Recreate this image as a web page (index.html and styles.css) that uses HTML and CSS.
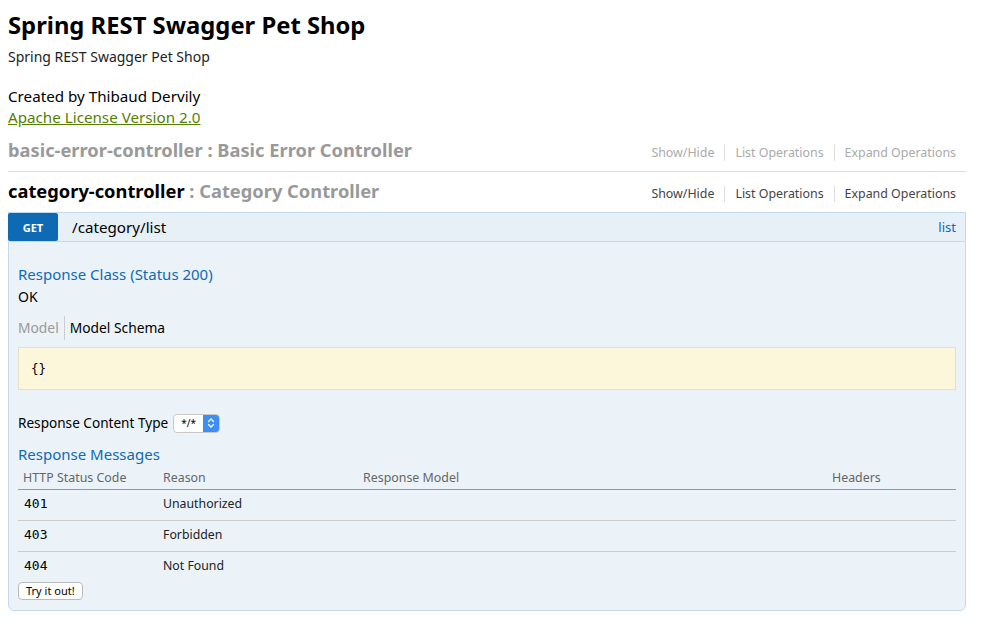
FILE: index.html
```html
<!DOCTYPE html>
<html>
<head>
<meta charset="utf-8">
<title>Spring REST Swagger Pet Shop</title>
<link rel="stylesheet" href="styles.css">
</head>
<body>
<div class="container">
  <div class="info">
    <h1 class="info-title">Spring REST Swagger Pet Shop</h1>
    <div class="info-desc">Spring REST Swagger Pet Shop</div>
    <div class="info-contact">Created by Thibaud Dervily</div>
    <div class="info-license"><a href="#">Apache License Version 2.0</a></div>
  </div>

  <div class="resource">
    <div class="resource-heading first">
      <h2 class="resource-name inactive">basic-error-controller <span class="resource-desc">: Basic Error Controller</span></h2>
      <ul class="options light">
        <li>Show/Hide</li>
        <li>List Operations</li>
        <li>Expand Operations</li>
      </ul>
    </div>
  </div>

  <div class="resource">
    <div class="resource-heading second">
      <h2 class="resource-name">category-controller <span class="resource-desc">: Category Controller</span></h2>
      <ul class="options">
        <li>Show/Hide</li>
        <li>List Operations</li>
        <li>Expand Operations</li>
      </ul>
    </div>

    <div class="operation">
      <div class="op-heading">
        <span class="http-method">GET</span>
        <span class="op-path">/category/list</span>
        <span class="op-summary">list</span>
      </div>
      <div class="op-content">
        <h4 class="section-title">Response Class (Status 200)</h4>
        <div class="status-text">OK</div>
        <div class="model-tabs">
          <span class="tab tab-inactive">Model</span>
          <span class="tab tab-active">Model Schema</span>
        </div>
        <div class="snippet"><code>{}</code></div>

        <div class="content-type">
          <span>Response Content Type</span>
          <span class="select">
            <span class="select-value">*/*</span>
            <span class="select-arrow">
              <svg width="8" height="12" viewBox="0 0 8 12"><path d="M1.5 4.5 L4 2 L6.5 4.5 M1.5 7.5 L4 10 L6.5 7.5" fill="none" stroke="#fff" stroke-width="1.3" stroke-linecap="round" stroke-linejoin="round"/></svg>
            </span>
          </span>
        </div>

        <h4 class="section-title messages-title">Response Messages</h4>
        <table class="messages">
          <thead>
            <tr>
              <th class="c1">HTTP Status Code</th>
              <th class="c2">Reason</th>
              <th class="c3">Response Model</th>
              <th class="c4">Headers</th>
            </tr>
          </thead>
          <tbody>
            <tr><td class="code">401</td><td>Unauthorized</td><td></td><td></td></tr>
            <tr><td class="code">403</td><td>Forbidden</td><td></td><td></td></tr>
            <tr class="last"><td class="code">404</td><td>Not Found</td><td></td><td></td></tr>
          </tbody>
        </table>
        <button class="try-btn" type="button">Try it out!</button>
      </div>
    </div>
  </div>
</div>
</body>
</html>
```

FILE: styles.css
```css
* { box-sizing: border-box; }
html, body { margin: 0; padding: 0; background: #fff; }
body {
  font-family: "Noto Sans", "Open Sans", "DejaVu Sans", sans-serif;
  color: #000;
  font-size: 14px;
}
.container {
  width: 958px;
  margin-left: 8px;
}
.info-title {
  margin: 10px 0 0;
  font-size: 23.8px;
  line-height: 30px;
  font-weight: 700;
}
.info-desc {
  margin-top: 7px;
  font-size: 14px;
  line-height: 20px;
  color: #222;
}
.info-contact {
  margin-top: 19px;
  font-size: 15.2px;
  line-height: 21px;
}
.info-license {
  font-size: 15.2px;
  line-height: 21px;
}
.info-license a { color: #547f00; text-decoration: underline; }

.resource-heading {
  display: flex;
  justify-content: space-between;
  align-items: baseline;
}
.resource-heading.first {
  height: 44px;
  padding-top: 10px;
  border-bottom: 1px solid #ddd;
}
.resource-heading.second {
  height: 40px;
  padding-top: 7px;
}
.resource-name {
  margin: 0;
  font-size: 18.3px;
  line-height: 24px;
  font-weight: 700;
  color: #000;
}
.resource-name.inactive { color: #999; }
.resource-desc { color: #999; }
.options {
  display: flex;
  list-style: none;
  margin: 0 10px 0 0;
  padding: 0;
  font-size: 12.4px;
  line-height: 16px;
}
.options li {
  color: #444;
  padding: 0 10px;
  border-left: 1px solid #ddd;
}
.options li:first-child { border-left: none; }
.options li:last-child { padding-right: 0; }
.options.light li { color: #aaa; }

.op-heading {
  display: flex;
  align-items: center;
  height: 29px;
  background: #e7f0f7;
  border: 1px solid #c3d9ec;
  border-bottom: none;
}
.http-method {
  width: 50px;
  height: 28px;
  margin-left: -1px;
  background: #0f6ab4;
  color: #fff;
  font-size: 11px;
  font-weight: 700;
  display: flex;
  align-items: center;
  justify-content: center;
  border-radius: 2px;
}
.op-path {
  margin-left: 14px;
  font-size: 15.2px;
  flex: 1;
}
.op-summary {
  color: #0f6ab4;
  font-size: 13px;
  margin-right: 9px;
}
.op-content {
  background: #ebf3f9;
  border: 1px solid #c3d9ec;
  border-radius: 0 0 6px 6px;
  padding: 21px 9px 10px;
}
.section-title {
  margin: 0;
  color: #0f6ab4;
  font-size: 15px;
  line-height: 22px;
  font-weight: 400;
}
.status-text {
  font-size: 14px;
  line-height: 20px;
  margin-top: 2px;
}
.model-tabs {
  display: flex;
  margin-top: 9px;
  height: 24px;
  align-items: center;
}
.tab { font-size: 13.8px; line-height: 24px; }
.tab-inactive { color: #999; padding-right: 5px; border-right: 1px solid #ccc; }
.tab-active { padding-left: 5px; }
.snippet {
  margin-top: 7px;
  height: 43px;
  background: #fcf6db;
  border: 1px solid #e5e0c6;
  display: flex;
  align-items: center;
  padding-left: 12px;
}
.snippet code {
  font-family: "DejaVu Sans Mono", "Liberation Mono", monospace;
  font-size: 12.5px;
}
.content-type {
  display: flex;
  align-items: center;
  margin-top: 23px;
  font-size: 13.6px;
  line-height: 20px;
  gap: 5px;
}
.select {
  display: inline-flex;
  height: 19px;
  width: 47px;
  border: 1px solid #c8c8c8;
  border-radius: 4px;
  background: #fff;
  overflow: hidden;
}
.select-value {
  flex: 1;
  font-size: 10px;
  line-height: 17px;
  text-align: center;
}
.select-arrow {
  width: 16px;
  background: #3d8ef0;
  display: flex;
  align-items: center;
  justify-content: center;
}
.messages-title {
  margin-top: 10px;
  font-size: 15px;
}
.messages {
  width: 100%;
  border-collapse: collapse;
  margin-top: 2px;
}
.messages th {
  text-align: left;
  font-weight: 400;
  color: #666;
  font-size: 12.4px;
  line-height: 16px;
  padding: 3px 5px 3px;
  border-bottom: 1px solid #999;
}
.c1 { width: 140px; }
.c2 { width: 200px; }
.c3 { width: 469px; }
.messages td {
  font-size: 12.3px;
  line-height: 16px;
  padding: 6px 5px 8px;
  border-bottom: 1px solid #ccc;
  color: #222;
  height: 31px;
}
.messages tr.last td { border-bottom: none; height: 30px; }
.messages td.code {
  font-family: "DejaVu Sans Mono", "Liberation Mono", monospace;
  font-size: 13px;
  color: #000;
  padding-left: 6px;
}
.try-btn {
  display: block;
  margin-top: 0;
  height: 18px;
  padding: 0 7px;
  font-family: "Noto Sans", sans-serif;
  font-size: 11px;
  line-height: 16px;
  background: #fff;
  border: 1px solid #bbb;
  border-radius: 4px;
  color: #000;
}
```
